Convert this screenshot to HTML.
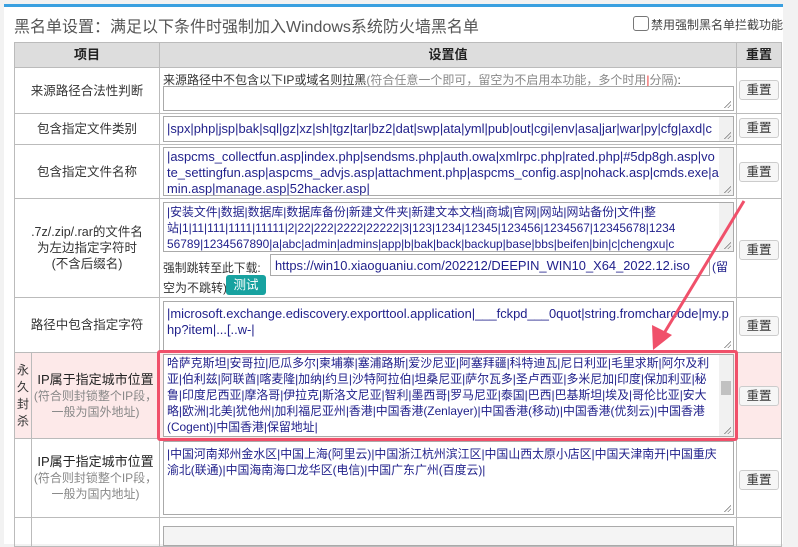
<!DOCTYPE html>
<html><head><meta charset="utf-8"><style>
*{box-sizing:border-box;margin:0;padding:0}
body{width:798px;height:534px;overflow:hidden;background:#f2f2f2;font-family:"Liberation Sans","Noto Sans CJK SC",sans-serif;position:relative}
.abs{position:absolute}
#panel{left:4px;top:4px;width:779px;height:540px;background:#fff;border-top:3px solid #3aa0e0}
#title{left:14px;top:13px;font-size:16px;color:#555;white-space:nowrap}
#chk{left:633px;top:16px;width:16px;height:15px;border:1px solid #777;border-radius:3px;background:#fff}
#chkl{left:651px;top:16px;font-size:12px;color:#444;white-space:nowrap}
.c{position:absolute;border:1px solid #bbb;font-size:12.5px;color:#333;text-align:center;display:flex;align-items:center;justify-content:center;line-height:16px;white-space:nowrap}
.h{background:#ddd;font-weight:bold;color:#222;font-size:13px}
.ta{position:absolute;border:1px solid #aaa;background:#fff;font-size:12.9px;line-height:16px;color:#1f1f8a;padding:1px 16px 0 3px;overflow:hidden;white-space:nowrap}
.btn{position:absolute;left:739px;width:40px;height:20px;border:1px solid #ccc;border-radius:3px;background:#f6f6f6;font-size:12.5px;color:#333;text-align:center;line-height:18px}
.sb{position:absolute;right:0;top:0;width:14px;height:100%;background:#f1f1f1}
.grip{position:absolute;right:2px;bottom:2px;width:8px;height:8px;background:linear-gradient(135deg,transparent 55%,#888 56%,#888 62%,transparent 63%,transparent 75%,#888 76%,#888 82%,transparent 83%)}
.cj{font-size:11.9px}
</style></head><body>
<div id="panel" class="abs"></div>
<div id="title" class="abs">黑名单设置：满足以下条件时强制加入Windows系统防火墙黑名单</div>
<div id="chk" class="abs"></div>
<div id="chkl" class="abs">禁用强制黑名单拦截功能</div>

<div class="c h" style="left:14px;top:42px;width:146px;height:26px">项目</div>
<div class="c h" style="left:159px;top:42px;width:578px;height:26px">设置值</div>
<div class="c h" style="left:736px;top:42px;width:46px;height:26px">重置</div>

<div class="c" style="left:14px;top:67px;width:146px;height:47px">来源路径合法性判断</div>
<div class="c" style="left:159px;top:67px;width:578px;height:47px"></div>
<div class="c" style="left:736px;top:67px;width:46px;height:47px"></div>

<div class="c" style="left:14px;top:113px;width:146px;height:32px">包含指定文件类别</div>
<div class="c" style="left:159px;top:113px;width:578px;height:32px"></div>
<div class="c" style="left:736px;top:113px;width:46px;height:32px"></div>

<div class="c" style="left:14px;top:144px;width:146px;height:55px">包含指定文件名称</div>
<div class="c" style="left:159px;top:144px;width:578px;height:55px"></div>
<div class="c" style="left:736px;top:144px;width:46px;height:55px"></div>

<div class="c" style="left:14px;top:198px;width:146px;height:100px">.7z/.zip/.rar的文件名<br>为左边指定字符时<br>(不含后缀名)</div>
<div class="c" style="left:159px;top:198px;width:578px;height:100px"></div>
<div class="c" style="left:736px;top:198px;width:46px;height:100px"></div>

<div class="c" style="left:14px;top:297px;width:146px;height:56px">路径中包含指定字符</div>
<div class="c" style="left:159px;top:297px;width:578px;height:56px"></div>
<div class="c" style="left:736px;top:297px;width:46px;height:56px"></div>

<div class="c" style="left:14px;top:352px;width:18px;height:87px;background:#fde9e9;line-height:17px;font-size:12px">永<br>久<br>封<br>杀</div>
<div class="c" style="left:31px;top:352px;width:129px;height:87px;background:#fde9e9;line-height:16px"><div><span style="font-size:13px;color:#222">IP属于指定城市位置</span><br><span style="color:#888;font-size:12px">(符合则封锁整个IP段，<br>一般为国外地址)</span></div></div>
<div class="c" style="left:159px;top:352px;width:578px;height:87px;background:#fde9e9"></div>
<div class="c" style="left:736px;top:352px;width:46px;height:87px;background:#fde9e9"></div>

<div class="c" style="left:14px;top:438px;width:18px;height:80px"></div>
<div class="c" style="left:31px;top:438px;width:129px;height:80px;line-height:16px"><div><span style="font-size:13px;color:#222">IP属于指定城市位置</span><br><span style="color:#888;font-size:12px">(符合则封锁整个IP段，<br>一般为国内地址)</span></div></div>
<div class="c" style="left:159px;top:438px;width:578px;height:80px"></div>
<div class="c" style="left:736px;top:438px;width:46px;height:80px"></div>

<div class="c" style="left:14px;top:517px;width:18px;height:30px"></div>
<div class="c" style="left:31px;top:517px;width:129px;height:30px"></div>
<div class="c" style="left:159px;top:517px;width:578px;height:30px"></div>
<div class="c" style="left:736px;top:517px;width:46px;height:30px"></div>

<div class="abs" style="left:163px;top:71px;font-size:12px;color:#333;white-space:nowrap">来源路径中不包含以下IP或域名则拉黑<span style="color:#888">(符合任意一个即可，留空为不启用本功能，多个时用<span style="color:#e33">|</span>分隔)</span>:</div>
<div class="ta" style="left:163px;top:86px;width:571px;height:25px;padding-right:3px"><div class="grip"></div></div>
<div class="btn" style="top:80px">重置</div>

<div class="ta" style="left:163px;top:116px;width:571px;height:26px;padding-top:4px">|spx|php|jsp|bak|sql|gz|xz|sh|tgz|tar|bz2|dat|swp|ata|yml|pub|out|cgi|env|asa|jar|war|py|cfg|axd|c<div class="sb"><div class="grip"></div></div></div>
<div class="btn" style="top:118px">重置</div>

<div class="ta" style="left:163px;top:147px;width:571px;height:49px">|aspcms_collectfun.asp|index.php|sendsms.php|auth.owa|xmlrpc.php|rated.php|#5dp8gh.asp|vo<br>te_settingfun.asp|aspcms_advjs.asp|attachment.php|aspcms_config.asp|nohack.asp|cmds.exe|ad<br>min.asp|manage.asp|52hacker.asp|<div class="sb"><div class="grip"></div></div></div>
<div class="btn" style="top:162px">重置</div>

<div class="ta cj" style="left:163px;top:202px;width:571px;height:50px">|安装文件|数据|数据库|数据库备份|新建文件夹|新建文本文档|商城|官网|网站|网站备份|文件|整<br>站|1|11|111|1111|11111|2|22|222|2222|22222|3|123|1234|12345|123456|1234567|12345678|1234<br>56789|1234567890|a|abc|admin|admins|app|b|bak|back|backup|base|bbs|beifen|bin|c|chengxu|c<div class="sb"><div class="grip"></div></div></div>
<div class="abs" style="left:163px;top:259px;font-size:11.8px;color:#333;white-space:nowrap">强制跳转至此下载:</div>
<div class="abs" style="left:270px;top:254px;width:440px;height:22px;border:1px solid #aaa;font-size:12.9px;color:#1f1f8a;padding:3px 4px;white-space:nowrap;overflow:hidden;background:#fff">https://win10.xiaoguaniu.com/202212/DEEPIN_WIN10_X64_2022.12.iso</div>
<div class="abs" style="left:712px;top:258px;font-size:12px;color:#1f1f8a">(留</div>
<div class="abs" style="left:163px;top:279px;font-size:12px;color:#333">空为不跳转)</div>
<div class="abs" style="left:226px;top:275px;width:40px;height:20px;background:#17a2a0;border-radius:3px;color:#fff;font-size:12.5px;text-align:center;line-height:20px">测试</div>
<div class="btn" style="top:240px">重置</div>

<div class="ta" style="left:163px;top:301px;width:571px;height:50px;padding-top:4px">|microsoft.exchange.ediscovery.exporttool.application|___fckpd___0quot|string.fromcharcode|my.p<br>hp?item|...[..w-|<div class="grip"></div></div>
<div class="btn" style="top:316px">重置</div>

<div class="abs" style="left:157px;top:350px;width:581px;height:91px;border:3px solid #f0506a;border-radius:3px"></div>
<div class="ta cj" style="left:163px;top:354px;width:571px;height:83px;padding-top:0">哈萨克斯坦|安哥拉|厄瓜多尔|柬埔寨|塞浦路斯|爱沙尼亚|阿塞拜疆|科特迪瓦|尼日利亚|毛里求斯|阿尔及利<br>亚|伯利兹|阿联酋|喀麦隆|加纳|约旦|沙特阿拉伯|坦桑尼亚|萨尔瓦多|圣卢西亚|多米尼加|印度|保加利亚|秘<br>鲁|印度尼西亚|摩洛哥|伊拉克|斯洛文尼亚|智利|墨西哥|罗马尼亚|泰国|巴西|巴基斯坦|埃及|哥伦比亚|安大<br>略|欧洲|北美|犹他州|加利福尼亚州|香港|中国香港(Zenlayer)|中国香港(移动)|中国香港(优刻云)|中国香港<br>(Cogent)|中国香港|保留地址|<div class="sb"><div style="position:absolute;left:2px;top:26px;width:10px;height:14px;background:#c1c1c1"></div><div class="grip"></div></div></div>
<div class="btn" style="top:386px">重置</div>

<div class="ta cj" style="left:163px;top:441px;width:571px;height:74px;padding-top:4px">|中国河南郑州金水区|中国上海(阿里云)|中国浙江杭州滨江区|中国山西太原小店区|中国天津南开|中国重庆<br>渝北(联通)|中国海南海口龙华区(电信)|中国广东广州(百度云)|<div class="grip"></div></div>
<div class="btn" style="top:470px">重置</div>

<div class="ta" style="left:163px;top:526px;width:571px;height:20px;background:#f4f4f4"></div>

<svg class="abs" style="left:0;top:0" width="798" height="534">
<line x1="744" y1="201" x2="660" y2="340" stroke="#f0506a" stroke-width="3"/>
<polygon points="653,350 652,325 672,335" fill="#f0506a"/>
</svg>
</body></html>
